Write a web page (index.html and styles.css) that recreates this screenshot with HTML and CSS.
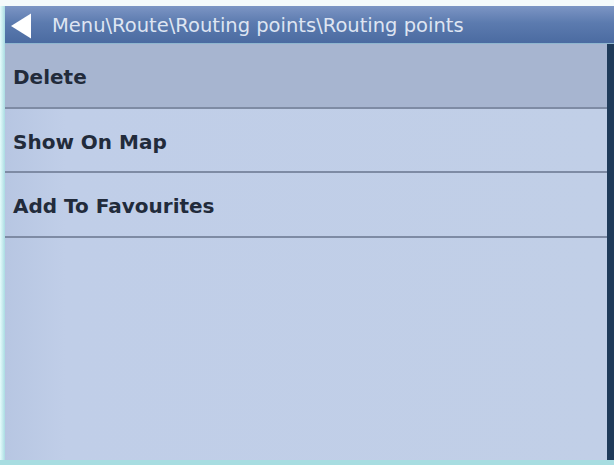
FILE: index.html
```html
<!DOCTYPE html>
<html>
<head>
<meta charset="utf-8">
<link rel="stylesheet" href="styles.css">
</head>
<body>
<div class="screen">
  <div class="frame">
    <div class="edge-left"></div>
    <div class="main">
      <div class="header">
        <svg class="back" width="22" height="26" viewBox="0 0 22 26"><polygon points="21,0.5 21,25.5 1,13" fill="#ffffff"/></svg>
        <span class="title">Menu\Route\Routing points\Routing points</span>
      </div>
      <div class="body">
        <div class="list">
          <div class="item selected">Delete</div>
          <div class="item">Show On Map</div>
          <div class="item">Add To Favourites</div>
        </div>
        <div class="scrollbar"></div>
      </div>
    </div>
  </div>
  <div class="edge-bottom"></div>
</div>
</body>
</html>
```
FILE: styles.css
```css
html, body {
  margin: 0;
  padding: 0;
  background: #ffffff;
}
.screen {
  width: 614px;
  height: 465px;
  display: flex;
  flex-direction: column;
  padding-top: 6px;
  box-sizing: border-box;
  background: #f4fafb;
}
.frame {
  flex: 1;
  display: flex;
}
.edge-left {
  width: 5px;
  background: linear-gradient(to right, #e6fbfb, #a9dce2);
}
.main {
  flex: 1;
  display: flex;
  flex-direction: column;
}
.header {
  height: 38px;
  display: flex;
  align-items: center;
  background: linear-gradient(to bottom, #7c95c4 0%, #5c7baf 45%, #4b6ba1 100%);
  border-bottom: 1px solid #8fb6cf;
  box-sizing: border-box;
}
.back {
  margin-left: 5px;
  margin-right: 20px;
  margin-top: 2px;
}
.title {
  font-family: "DejaVu Sans", sans-serif;
  font-size: 19.5px;
  color: #dee5f2;
  margin-top: 2px;
}
.body {
  flex: 1;
  display: flex;
  background: #c1cfe7;
}
.list {
  flex: 1;
  display: flex;
  flex-direction: column;
  background: linear-gradient(to right, #b7c6e2 0px, #c0cee8 60px, #c1cfe7 100%);
}
.item {
  height: 64.5px;
  box-sizing: border-box;
  border-bottom: 2px solid #7e8ba4;
  display: flex;
  align-items: center;
  padding-left: 8px;
  padding-top: 4px;
  font-family: "DejaVu Sans", sans-serif;
  font-weight: bold;
  font-size: 20px;
  color: #222b3b;
}
.item.selected {
  background: #a7b5d0;
}
.scrollbar {
  width: 7px;
  background: #1f3b5a;
}
.edge-bottom {
  height: 5px;
  background: #a8dde1;
}
```
